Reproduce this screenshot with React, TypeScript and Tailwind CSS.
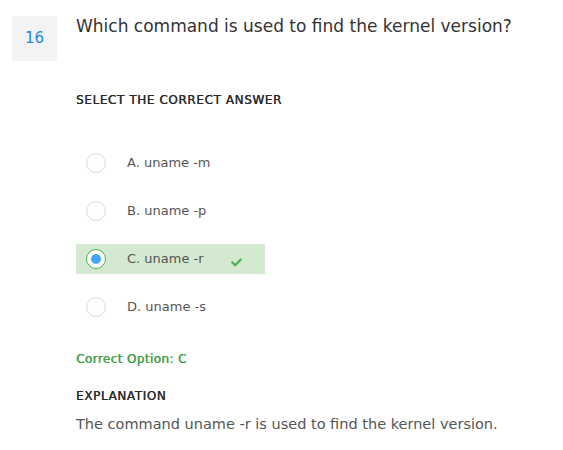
import { FaCheck } from "react-icons/fa";

const options = [
  { key: "A", text: "uname -m" },
  { key: "B", text: "uname -p" },
  { key: "C", text: "uname -r" },
  { key: "D", text: "uname -s" },
];

const selected = "C";
const correct = "C";

export default function App() {
  return (
    <div
      className="min-h-screen bg-white text-[#333]"
      style={{ fontFamily: "'DejaVu Sans', 'Liberation Sans', sans-serif" }}
    >
      <div className="flex items-start gap-[19px] pl-3 pt-4">
        {/* NUMBER */}
        <div className="flex h-[45px] w-[45px] shrink-0 items-center justify-center bg-[#f3f3f3] text-[15px] text-[#1e88e5]">
          16
        </div>

        <div className="flex-1">
          {/* QUESTION */}
          <h1 className="-mt-[2px] text-[17px] leading-[24px] text-[#333]">
            Which command is used to find the kernel version?
          </h1>

          <div className="mt-[54px] text-[12px] leading-[16px] tracking-[0.6px] text-[#2a2a2a] [text-shadow:0.3px_0_0_#2a2a2a]">
            SELECT THE CORRECT ANSWER
          </div>

          {/* OPTIONS */}
          <div className="mt-[40px] flex flex-col gap-[18px]">
            {options.map((o) => {
              const isSel = o.key === selected;
              return (
                <div
                  key={o.key}
                  className={
                    "flex h-[30px] w-[189px] items-center pl-[10px] " +
                    (isSel ? "bg-[#d3ead0]" : "")
                  }
                >
                  <div
                    className={
                      "flex h-[20px] w-[20px] items-center justify-center rounded-full border bg-white " +
                      (isSel ? "border-[#4caf50]" : "border-[#dcdcdc]")
                    }
                  >
                    {isSel && <div className="h-[10px] w-[10px] rounded-full bg-[#42a5f5]" />}
                  </div>
                  <span className="ml-[21px] text-[13px] text-[#555]">
                    {o.key}. {o.text}
                  </span>
                  {isSel && o.key === correct && (
                    <FaCheck className="ml-[27px] mt-[6px] text-[11px] text-[#4caf50]" />
                  )}
                </div>
              );
            })}
          </div>

          {/* RESULT */}
          <div className="mt-[29px] text-[12px] leading-[17px] tracking-[0.4px] text-[#43a047] [text-shadow:0.4px_0_0_#43a047]">
            Correct Option: C
          </div>

          <div className="mt-[20px] text-[12px] leading-[16px] tracking-[0.6px] text-[#2a2a2a] [text-shadow:0.3px_0_0_#2a2a2a]">
            EXPLANATION
          </div>

          <p className="mt-[10px] text-[14.5px] text-[#555]">
            The command uname -r is used to find the kernel version.
          </p>
        </div>
      </div>
    </div>
  );
}
